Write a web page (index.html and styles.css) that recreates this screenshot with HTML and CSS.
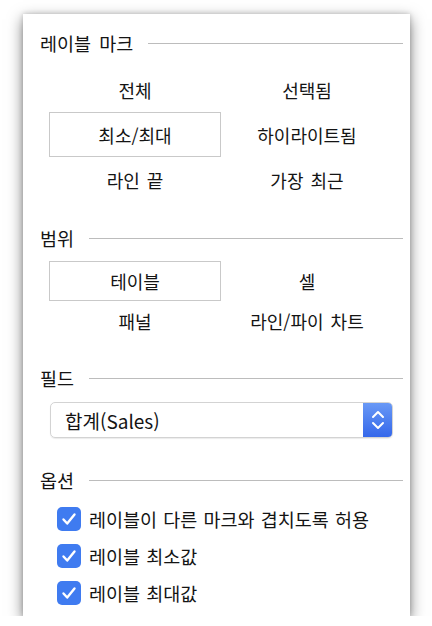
FILE: index.html
```html
<!DOCTYPE html>
<html lang="ko">
<head>
<meta charset="utf-8">
<link rel="stylesheet" href="styles.css">
</head>
<body>
<div class="panel">
  <section class="sec sec-marks">
    <div class="head"><span>레이블 마크</span><i class="rule"></i></div>
    <div class="grid grid-marks">
      <div class="opt">전체</div>
      <div class="opt">선택됨</div>
      <div class="opt sel">최소/최대</div>
      <div class="opt">하이라이트됨</div>
      <div class="opt">라인 끝</div>
      <div class="opt">가장 최근</div>
    </div>
  </section>
  <section class="sec sec-scope">
    <div class="head"><span>범위</span><i class="rule"></i></div>
    <div class="grid grid-scope">
      <div class="opt sel">테이블</div>
      <div class="opt">셀</div>
      <div class="opt">패널</div>
      <div class="opt">라인/파이 차트</div>
    </div>
  </section>
  <section class="sec sec-field">
    <div class="head"><span>필드</span><i class="rule"></i></div>
    <div class="select">
      <span class="select-text">합계(Sales)</span>
      <span class="stepper">
        <svg width="30" height="36" viewBox="0 0 30 36"><polyline points="10,15 15,10 20,15" fill="none" stroke="#fff" stroke-width="2" stroke-linecap="round" stroke-linejoin="round"/><polyline points="10,21 15,26 20,21" fill="none" stroke="#fff" stroke-width="2" stroke-linecap="round" stroke-linejoin="round"/></svg>
      </span>
    </div>
  </section>
  <section class="sec sec-opts">
    <div class="head"><span>옵션</span><i class="rule"></i></div>
    <div class="checks">
      <label class="check"><span class="box"><svg width="24" height="24" viewBox="0 0 24 24"><path d="M6.5 12.5 L10.2 16.5 L17.5 7.5" fill="none" stroke="#fff" stroke-width="2.4" stroke-linecap="round" stroke-linejoin="round"/></svg></span>레이블이 다른 마크와 겹치도록 허용</label>
      <label class="check"><span class="box"><svg width="24" height="24" viewBox="0 0 24 24"><path d="M6.5 12.5 L10.2 16.5 L17.5 7.5" fill="none" stroke="#fff" stroke-width="2.4" stroke-linecap="round" stroke-linejoin="round"/></svg></span>레이블 최소값</label>
      <label class="check"><span class="box"><svg width="24" height="24" viewBox="0 0 24 24"><path d="M6.5 12.5 L10.2 16.5 L17.5 7.5" fill="none" stroke="#fff" stroke-width="2.4" stroke-linecap="round" stroke-linejoin="round"/></svg></span>레이블 최대값</label>
    </div>
  </section>
</div>
</body>
</html>
```
FILE: styles.css
```css
html, body {
  margin: 0;
  padding: 0;
  background: #ffffff;
}
body {
  padding: 14px 0 0 23px;
  font-family: "Noto Sans CJK KR", "Noto Sans", sans-serif;
  color: #141414;
}
.panel {
  width: 387px;
  height: 602px;
  background: #ffffff;
  box-shadow: 0 5px 14px rgba(0, 0, 0, 0.5), 0 0 5px rgba(0, 0, 0, 0.18);
  display: flex;
  flex-direction: column;
  box-sizing: border-box;
  padding-top: 14px;
}
.head {
  height: 30px;
  display: flex;
  align-items: center;
  gap: 15px;
  padding: 0 7px 0 17px;
  font-size: 18.5px;
  word-spacing: 3px;
  line-height: 1;
}
.head span {
  white-space: nowrap;
}
.rule {
  flex: 1;
  height: 1px;
  background: #bcbcbc;
}
.grid {
  display: grid;
  grid-template-columns: 172px 172px;
  padding-left: 26px;
  font-size: 18px;
  word-spacing: 2px;
}
.grid-marks {
  margin-top: 9px;
  grid-auto-rows: 45px;
}
.grid-scope {
  margin-top: 8px;
  grid-auto-rows: 40px;
}
.opt {
  display: flex;
  align-items: center;
  justify-content: center;
  box-sizing: border-box;
  white-space: nowrap;
}
.opt.sel {
  border: 1px solid #c9c9c9;
}
.sec-scope {
  margin-top: 21px;
}
.sec-field {
  margin-top: 22px;
}
.select {
  margin: 9px 0 0 27px;
  width: 343px;
  height: 36px;
  box-sizing: border-box;
  border: 1px solid #d3d3d3;
  border-radius: 5px;
  display: flex;
  align-items: center;
  justify-content: space-between;
  box-shadow: 0 1px 1px rgba(0, 0, 0, 0.08);
  overflow: hidden;
}
.select-text {
  padding-left: 14px;
  font-size: 19px;
  color: #141414;
}
.stepper {
  width: 30px;
  height: 36px;
  margin: -1px -1px -1px 0;
  background: linear-gradient(#6a9af6, #3366ea);
  border-radius: 0 5px 5px 0;
  display: flex;
}
.sec-opts {
  margin-top: 27px;
}
.checks {
  margin-top: 5px;
  padding-left: 34px;
  display: flex;
  flex-direction: column;
}
.check {
  height: 37px;
  display: flex;
  align-items: center;
  gap: 8px;
  font-size: 18.5px;
  word-spacing: 1px;
  white-space: nowrap;
}
.box {
  width: 24px;
  height: 24px;
  border-radius: 5px;
  background: #3f7bf0;
  display: flex;
  flex: none;
}
```
